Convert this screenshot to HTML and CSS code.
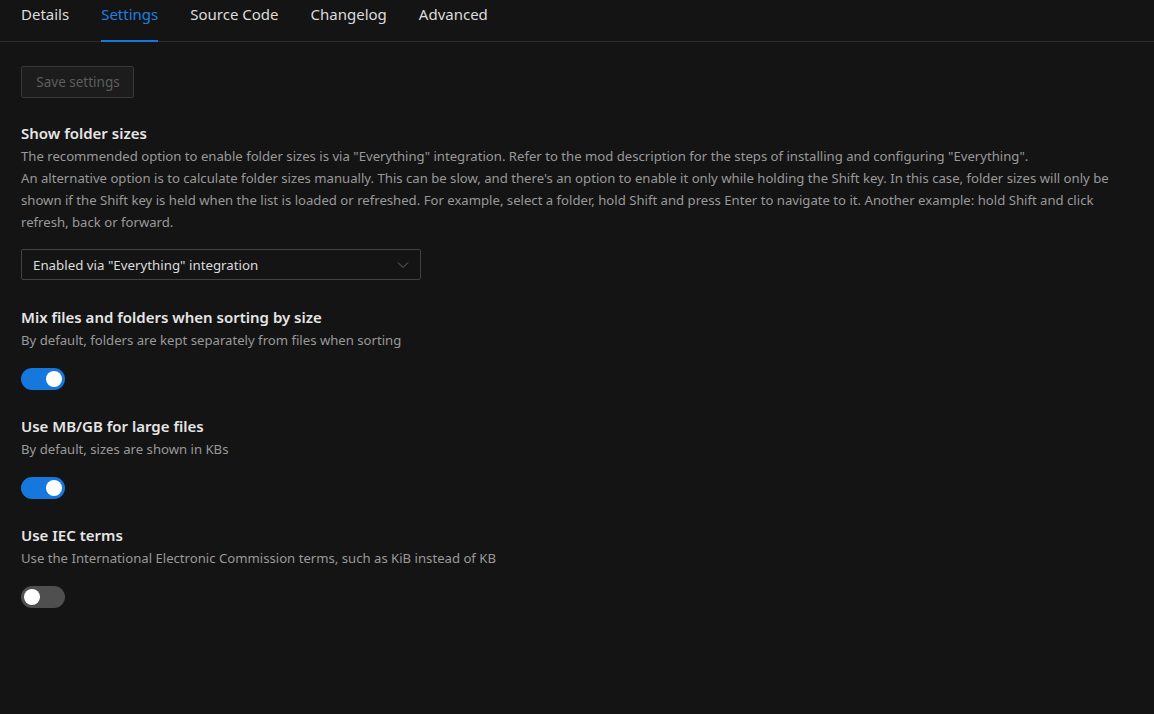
FILE: index.html
```html
<!DOCTYPE html>
<html>
<head>
<meta charset="utf-8">
<link rel="stylesheet" href="styles.css">
</head>
<body>
<nav class="tabs">
  <div class="tab">Details</div>
  <div class="tab active">Settings</div>
  <div class="tab">Source Code</div>
  <div class="tab">Changelog</div>
  <div class="tab">Advanced</div>
</nav>
<main class="content">
  <button class="save" disabled>Save settings</button>

  <section class="setting first">
    <h3 class="title">Show folder sizes</h3>
    <p class="desc">The recommended option to enable folder sizes is via "Everything" integration. Refer to the mod description for the steps of installing and configuring "Everything".<br>An alternative option is to calculate folder sizes manually. This can be slow, and there's an option to enable it only while holding the Shift key. In this case, folder sizes will only be shown if the Shift key is held when the list is loaded or refreshed. For example, select a folder, hold Shift and press Enter to navigate to it. Another example: hold Shift and click refresh, back or forward.</p>
    <div class="select">
      <span>Enabled via "Everything" integration</span>
      <svg class="chev" width="12" height="8" viewBox="0 0 12 8"><path d="M1 1.5 L6 6.5 L11 1.5" fill="none" stroke="#6a6a6a" stroke-width="1"/></svg>
    </div>
  </section>

  <section class="setting">
    <h3 class="title">Mix files and folders when sorting by size</h3>
    <p class="desc">By default, folders are kept separately from files when sorting</p>
    <div class="toggle on"><span class="knob"></span></div>
  </section>

  <section class="setting">
    <h3 class="title">Use MB/GB for large files</h3>
    <p class="desc">By default, sizes are shown in KBs</p>
    <div class="toggle on"><span class="knob"></span></div>
  </section>

  <section class="setting">
    <h3 class="title">Use IEC terms</h3>
    <p class="desc">Use the International Electronic Commission terms, such as KiB instead of KB</p>
    <div class="toggle"><span class="knob"></span></div>
  </section>
</main>
</body>
</html>
```

FILE: styles.css
```css
html, body {
  margin: 0;
  padding: 0;
  background: #141414;
  font-family: "Noto Sans", "Open Sans", sans-serif;
  color: #dcdcdc;
}
.tabs {
  display: flex;
  gap: 32px;
  padding-left: 21px;
  height: 41px;
  border-bottom: 1px solid #2c2c2c;
}
.tab {
  padding-top: 3px;
  font-size: 15px;
  line-height: 22px;
  color: #dcdcdc;
  box-sizing: border-box;
  height: 42px;
  margin-bottom: -1px;
}
.active {
  color: #1f7fe0;
  border-bottom: 2px solid #1677dd;
}
.content {
  padding: 24px 21px 0;
}
.save {
  display: block;
  font-family: inherit;
  font-size: 13.5px;
  color: #5e5e5e;
  background: #1c1c1c;
  border: 1px solid #383838;
  border-radius: 2px;
  width: 113px;
  height: 32px;
  padding: 0 0 0 1px;
  margin-bottom: 24px;
}
.setting {
  margin-bottom: 25px;
}
.setting.first {
  margin-bottom: 26px;
}
.title {
  margin: 0;
  font-size: 15px;
  font-weight: 600;
  color: #e6e6e6;
  line-height: 22px;
}
.desc {
  margin: 1px 0 0;
  font-size: 13.15px;
  line-height: 22px;
  color: #999;
}
.select {
  margin-top: 16px;
  width: 400px;
  height: 31px;
  box-sizing: border-box;
  border: 1px solid #424242;
  border-radius: 2px;
  display: flex;
  align-items: center;
  justify-content: space-between;
  padding: 0 11px;
  font-size: 13.3px;
  color: #dcdcdc;
}
.toggle {
  margin-top: 17px;
  width: 44px;
  height: 22px;
  border-radius: 11px;
  background: #4f4f4f;
  position: relative;
}
.toggle.on {
  background: #1677dd;
}
.knob {
  position: absolute;
  top: 3px;
  left: 3px;
  width: 16px;
  height: 16px;
  border-radius: 50%;
  background: #fff;
}
.toggle.on .knob {
  left: 25px;
}
```
